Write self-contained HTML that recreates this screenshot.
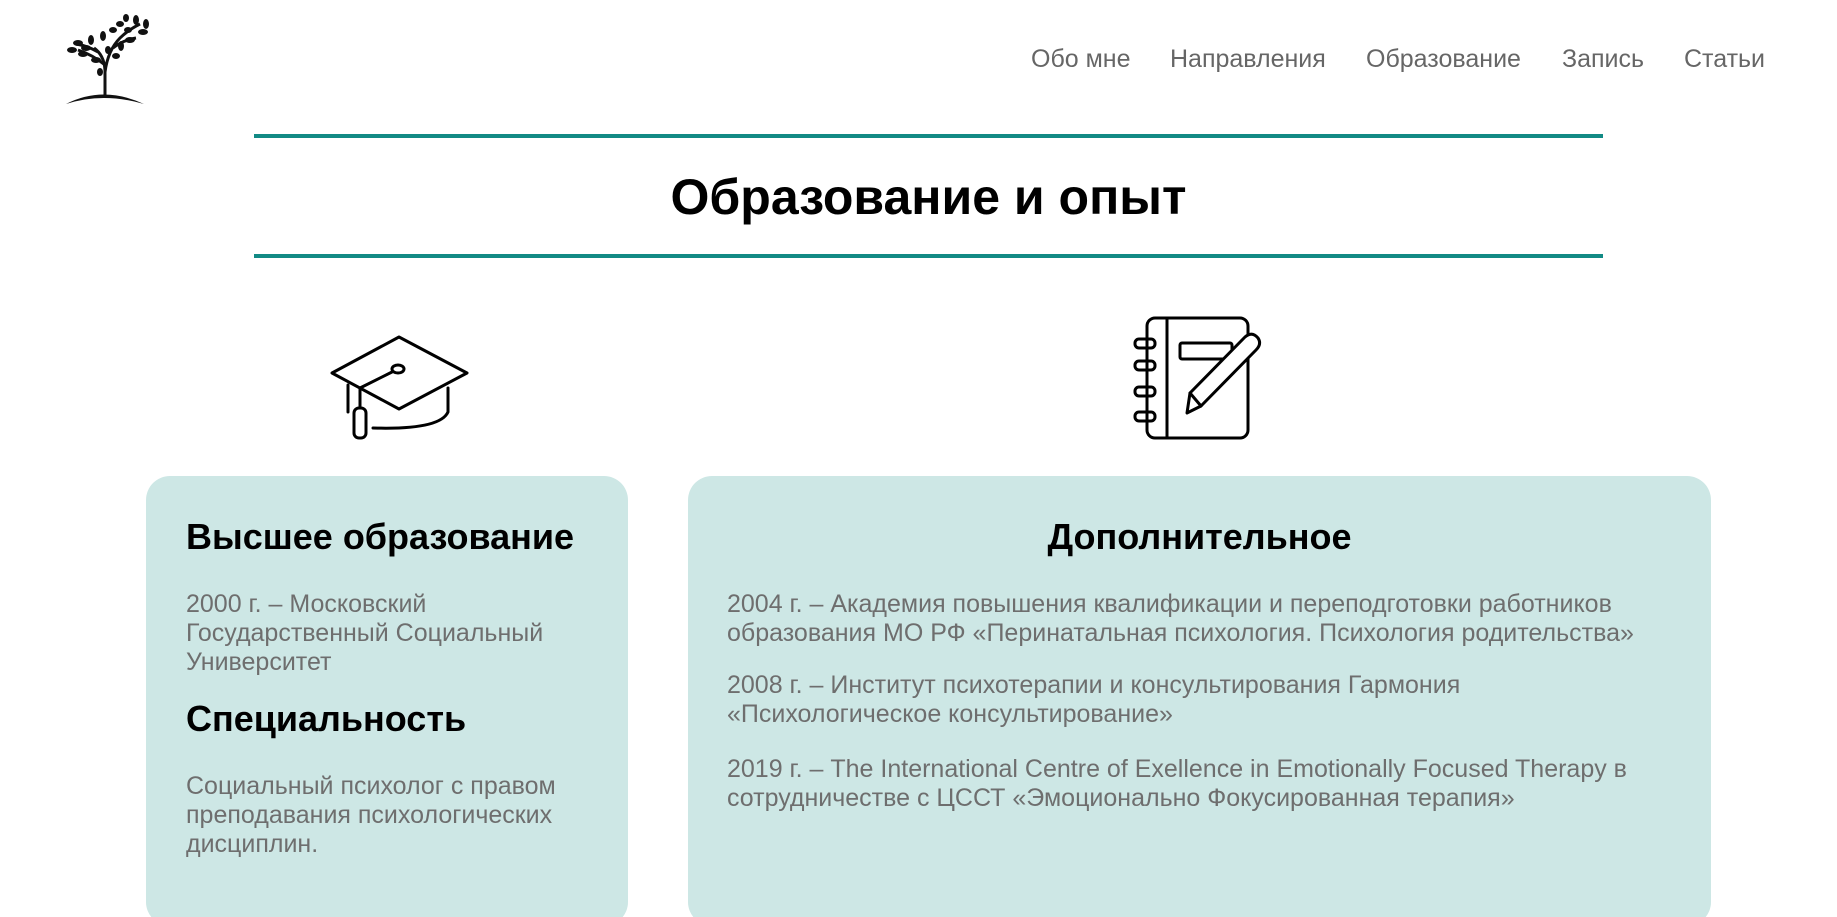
<!DOCTYPE html>
<html><head><meta charset="utf-8"><style>
html,body{margin:0;width:1837px;height:917px;overflow:hidden}
body{background:#fff;font-family:"Liberation Sans",Arial,sans-serif;position:relative}
#w{position:relative;width:1837px;height:917px;overflow:hidden}
.a{position:absolute;white-space:nowrap}
.nav{top:45px;font-size:25px;color:#666}
.line{position:absolute;left:254px;width:1349px;height:4px;background:#128a85}
.card{position:absolute;top:476px;height:450px;background:#cde7e5;border-radius:24px}
h2{position:absolute;margin:0;font-size:36px;font-weight:bold;color:#000;white-space:nowrap}
.p{position:absolute;font-size:25px;line-height:29px;color:#6e6e6e;white-space:nowrap}
</style></head><body><div id="w">
<svg class="a" style="left:58px;top:10px" width="100" height="100" viewBox="0 0 100 100">
<path d="M8 94 Q45 75 86 94 Q45 82 8 94Z" fill="#111"/>
<path d="M47 86 L47 60 Q46 45 36 38 M47 62 Q50 40 62 28 Q70 20 82 14 M47 55 Q35 45 20 40 M55 38 Q65 30 78 28 M40 42 Q30 36 18 34" stroke="#111" stroke-width="3" fill="none"/>
<g fill="#111"><ellipse cx="20" cy="33" rx="5" ry="3"/><ellipse cx="28" cy="38" rx="5" ry="3"/><ellipse cx="33" cy="30" rx="3" ry="5"/><ellipse cx="45" cy="26" rx="3" ry="5"/><ellipse cx="55" cy="20" rx="4" ry="3"/><ellipse cx="70" cy="20" rx="4" ry="3"/><ellipse cx="78" cy="10" rx="3" ry="5"/><ellipse cx="88" cy="14" rx="3" ry="5"/><ellipse cx="85" cy="22" rx="5" ry="3"/><ellipse cx="63" cy="36" rx="3" ry="5"/><ellipse cx="72" cy="30" rx="5" ry="3"/><ellipse cx="38" cy="50" rx="5" ry="3"/><ellipse cx="25" cy="44" rx="5" ry="3"/><ellipse cx="42" cy="62" rx="3" ry="4"/><ellipse cx="58" cy="46" rx="4" ry="3"/><ellipse cx="50" cy="40" rx="3" ry="4"/><ellipse cx="62" cy="14" rx="4" ry="3"/><ellipse cx="14" cy="40" rx="5" ry="3"/><ellipse cx="68" cy="8" rx="3" ry="4"/></g>
</svg>
<div class="a nav" style="left:1031px">Обо мне</div>
<div class="a nav" style="left:1170px">Направления</div>
<div class="a nav" style="left:1366px">Образование</div>
<div class="a nav" style="left:1562px">Запись</div>
<div class="a nav" style="left:1684px">Статьи</div>
<div class="line" style="top:134px"></div>
<div class="line" style="top:254px"></div>
<div class="a" style="left:0;width:1857px;text-align:center;top:168px;font-size:50px;font-weight:bold;color:#000">Образование и опыт</div>
<svg class="a" style="left:320px;top:320px" width="160" height="130" viewBox="320 320 160 130" fill="none" stroke="#000" stroke-width="3" stroke-linejoin="round" stroke-linecap="round">
<path d="M399 337 L467 373 L399 409 L332 373 Z"/>
<ellipse cx="398" cy="369" rx="6" ry="4"/>
<path d="M392 372 L360 388 L360 408"/>
<path d="M348 385 L348 412"/>
<path d="M448 388 L448 412 Q440 430 373 428"/>
<rect x="354" y="408" width="12" height="30" rx="5"/>
</svg>
<svg class="a" style="left:1120px;top:310px" width="160" height="140" viewBox="1120 310 160 140" fill="none" stroke="#000" stroke-width="3" stroke-linejoin="round" stroke-linecap="round">
<rect x="1147" y="318" width="101" height="120" rx="8"/>
<path d="M1167 318 L1167 438"/>
<rect x="1135" y="339" width="20" height="9" rx="4"/>
<rect x="1135" y="361" width="20" height="9" rx="4"/>
<rect x="1135" y="387" width="20" height="9" rx="4"/>
<rect x="1135" y="412" width="20" height="9" rx="4"/>
<rect x="1180" y="343" width="52" height="16" rx="2" fill="#fff"/>
<path d="M1187 413 L1190 393 L1245 337 Q1252 331 1258 338 Q1262 344 1256 350 L1201 406 Z" fill="#fff"/>
<path d="M1190 393 L1201 406"/>
</svg>
<div class="card" style="left:146px;width:482px"></div>
<div class="card" style="left:688px;width:1023px"></div>
<h2 style="left:186px;top:516px">Высшее образование</h2>
<div class="p" style="left:186px;top:590px">2000 г. – Московский<br>Государственный Социальный<br>Университет</div>
<h2 style="left:186px;top:698px">Специальность</h2>
<div class="p" style="left:186px;top:772px">Социальный психолог с правом<br>преподавания психологических<br>дисциплин.</div>
<h2 style="left:688px;width:1023px;text-align:center;top:516px">Дополнительное</h2>
<div class="p" style="left:727px;top:590px">2004 г. – Академия повышения квалификации и переподготовки работников<br>образования МО РФ «Перинатальная психология. Психология родительства»</div>
<div class="p" style="left:727px;top:671px">2008 г. – Институт психотерапии и консультирования Гармония<br>«Психологическое консультирование»</div>
<div class="p" style="left:727px;top:755px">2019 г. – The International Centre of Exellence in Emotionally Focused Therapy в<br>сотрудничестве с ЦССТ «Эмоционально Фокусированная терапия»</div>
</div></body></html>
